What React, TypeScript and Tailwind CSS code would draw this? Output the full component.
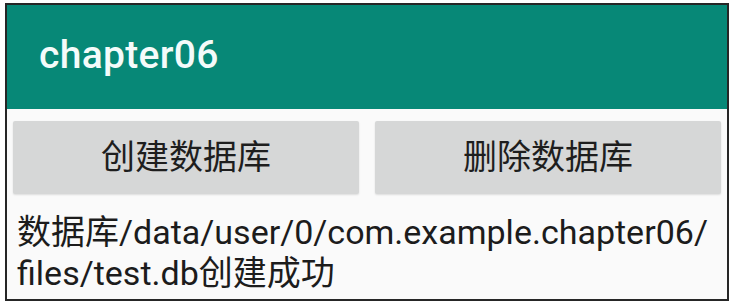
import React from "react";

export default function App() {
  const font = { fontFamily: 'Roboto, "Noto Sans CJK SC", sans-serif' };
  return (
    <div className="w-[731px] h-[306px] bg-white overflow-hidden" style={font}>
      <div className="ml-[5px] mt-[3px] w-[724px] h-[298px] border-2 border-[#262626] bg-[#fafafa] flex flex-col">
        <div className="h-[104px] bg-[#078877] flex items-center pl-[32px] pb-[4px]">
          <span className="text-[39px] font-medium leading-none tracking-[0.3px] text-[#f4fbfa]">chapter06</span>
        </div>
        <div className="flex gap-[16px] px-[6px] mt-[12px]">
          <div className="flex-1 h-[73px] bg-[#d6d7d7] rounded-[2px] flex items-center justify-center text-[34px] text-[#1e1e1e] shadow-[0_1px_2px_rgba(0,0,0,0.12)]">
            创建数据库
          </div>
          <div className="flex-1 h-[73px] bg-[#d6d7d7] rounded-[2px] flex items-center justify-center text-[34px] text-[#1e1e1e] shadow-[0_1px_2px_rgba(0,0,0,0.12)]">
            删除数据库
          </div>
        </div>
        <div className="px-[10px] mt-[18px] text-[34px] leading-[41px] text-[#1c1c1c]">
          数据库/data/user/0/com.example.chapter06/
          <br />
          files/test.db创建成功
        </div>
      </div>
    </div>
  );
}
